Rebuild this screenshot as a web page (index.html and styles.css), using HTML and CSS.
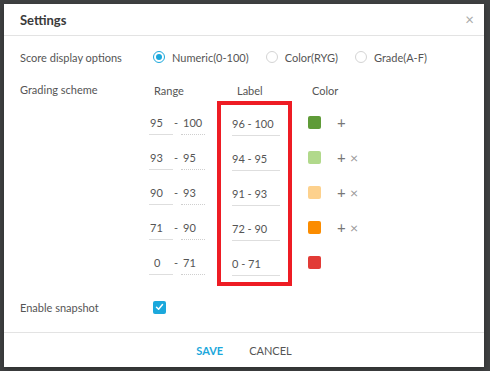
FILE: index.html
```html
<!DOCTYPE html>
<html lang="en">
<head>
    <meta charset="UTF-8">
    <meta name="viewport" content="width=device-width, initial-scale=1.0">
    <title>Settings</title>
    <link rel="stylesheet" href="styles.css">
</head>
<body>

    <div class="modal">
        <!-- Header -->
        <div class="modal-header">
            <h3>Settings</h3>
            <span class="close">&times;</span>
        </div>

        <div class="modal-body">
            <div class="form-row">
                <div class="row-label">Score display options</div>
                <div class="radio-group">
                    <label class="radio checked"><span class="circle"></span>Numeric(0-100)</label>
                    <label class="radio"><span class="circle"></span>Color(RYG)</label>
                    <label class="radio"><span class="circle"></span>Grade(A-F)</label>
                </div>
            </div>

            <div class="scheme">
                <div class="row-label scheme-label">Grading scheme</div>

                <div class="col col-range">
                    <div class="col-head">Range</div>
                    <div class="cell"><span class="input from">95</span><span class="dash">-</span><span class="input to">100</span></div>
                    <div class="cell"><span class="input from">93</span><span class="dash">-</span><span class="input to">95</span></div>
                    <div class="cell"><span class="input from">90</span><span class="dash">-</span><span class="input to">93</span></div>
                    <div class="cell"><span class="input from">71</span><span class="dash">-</span><span class="input to">90</span></div>
                    <div class="cell"><span class="input from center">0</span><span class="dash">-</span><span class="input to">71</span></div>
                </div>

                <div class="col col-label">
                    <div class="col-head">Label</div>
                    <div class="highlight">
                        <div class="cell"><span class="input label">96 - 100</span></div>
                        <div class="cell"><span class="input label">94 - 95</span></div>
                        <div class="cell"><span class="input label">91 - 93</span></div>
                        <div class="cell"><span class="input label">72 - 90</span></div>
                        <div class="cell"><span class="input label">0 - 71</span></div>
                    </div>
                </div>

                <div class="col col-color">
                    <div class="col-head">Color</div>
                    <div class="cell"><span class="swatch green"></span><span class="act">+</span></div>
                    <div class="cell"><span class="swatch light-green"></span><span class="act">+</span><span class="act remove">&times;</span></div>
                    <div class="cell"><span class="swatch light-orange"></span><span class="act">+</span><span class="act remove">&times;</span></div>
                    <div class="cell"><span class="swatch orange"></span><span class="act">+</span><span class="act remove">&times;</span></div>
                    <div class="cell"><span class="swatch red"></span></div>
                </div>
            </div>

            <div class="form-row snapshot">
                <div class="row-label">Enable snapshot</div>
                <span class="checkbox">
                    <svg width="9" height="8" viewBox="0 0 9 8"><path d="M1.5 4.2 L3.6 6.2 L7.5 1.6" fill="none" stroke="#fff" stroke-width="1.5" stroke-linecap="round" stroke-linejoin="round"/></svg>
                </span>
            </div>
        </div>

        <div class="modal-footer">
            <button class="btn btn-save">SAVE</button>
            <button class="btn btn-cancel">CANCEL</button>
        </div>
    </div>

</body>
</html>
```

FILE: styles.css
```css
body {
    margin: 0;
    padding: 4px;
    background-color: #3f4142;
    font-family: 'Lato', 'Open Sans', sans-serif;
    font-size: 11px;
    color: #555;
    box-sizing: border-box;
    height: 371px;
    overflow: hidden;
}

.modal {
    width: 480px;
    height: 363px;
    background-color: #fff;
    display: flex;
    flex-direction: column;
    box-shadow: 0 2px 6px rgba(0,0,0,0.3);
}

.modal-header {
    height: 31px;
    display: flex;
    align-items: center;
    justify-content: space-between;
    padding: 0 10px 0 16px;
    border-bottom: 1px solid #e3e3e3;
}

.modal-header h3 {
    margin: 0;
    font-size: 13px;
    font-weight: 700;
    color: #3a3a3a;
}

.close {
    color: #aaa;
    font-size: 15px;
    line-height: 1;
}

.modal-body {
    flex: 1;
    padding: 10px 16px 0 16px;
}

.form-row {
    display: flex;
    align-items: center;
    height: 22px;
}

.row-label {
    width: 133px;
    flex-shrink: 0;
    color: #555;
}

.radio-group {
    display: flex;
    gap: 17px;
}

.radio {
    display: flex;
    align-items: center;
    gap: 7px;
    color: #555;
}

.circle {
    width: 10px;
    height: 10px;
    border: 1px solid #d4d4d4;
    border-radius: 50%;
    position: relative;
}

.radio.checked .circle {
    border-color: #1ba8dc;
}

.radio.checked .circle::after {
    content: "";
    position: absolute;
    top: 2px;
    left: 2px;
    width: 6px;
    height: 6px;
    border-radius: 50%;
    background-color: #1ba8dc;
}

/* Grading scheme */
.scheme {
    display: flex;
    margin-top: 12px;
}

.scheme-label {
    width: 129px;
    height: 22px;
    line-height: 20px;
}

.col-head {
    height: 22px;
    line-height: 22px;
    margin-bottom: 3px;
}

.cell {
    height: 35px;
    display: flex;
    align-items: center;
}

.col-range {
    width: 56px;
}

.col-range .col-head {
    padding-left: 5px;
}

.input {
    display: inline-block;
    height: 22px;
    line-height: 22px;
    margin-top: 2px;
    border-bottom: 1px solid #dedede;
    color: #555;
}

.input.from {
    width: 23px;
    padding-left: 1px;
}

.input.from.center {
    width: 19px;
    padding-left: 5px;
}

.dash {
    width: 8px;
    padding-left: 1px;
    box-sizing: border-box;
}

.input.to {
    width: 22px;
    padding-left: 2px;
    border-bottom: 1px dotted #cfcfcf;
}

.col-label {
    margin-left: 12px;
    width: 75px;
}

.col-label .col-head {
    padding-left: 20px;
    margin-bottom: -1px;
}

.highlight {
    border: 4px solid #ee1c24;
    padding: 0 8px 2px 11px;
}

.input.label {
    width: 48px;
    margin-top: 3px;
}

.col-color {
    margin-left: 16px;
}

.col-color .col-head {
    padding-left: 4px;
}

.swatch {
    width: 13px;
    height: 13px;
    border-radius: 2px;
    margin-right: 16px;
}

.green { background-color: #5f9b38; }
.light-green { background-color: #b1d98b; }
.light-orange { background-color: #fdd18d; }
.orange { background-color: #fb8c00; }
.red { background-color: #e23b36; }

.act {
    color: #777;
    font-size: 15px;
    width: 11px;
    line-height: 1;
}

.act.remove {
    color: #999;
    font-size: 14px;
    margin-left: 2px;
}

.snapshot {
    margin-top: 10px;
}

.checkbox {
    width: 13px;
    height: 13px;
    border-radius: 2px;
    background-color: #1ba8dc;
    display: flex;
    align-items: center;
    justify-content: center;
}

/* Footer */
.modal-footer {
    height: 34px;
    border-top: 1px solid #e3e3e3;
    display: flex;
    justify-content: center;
    align-items: center;
    gap: 26px;
}

.btn {
    background: none;
    border: none;
    padding: 0;
    font-family: 'Lato', 'Open Sans', sans-serif;
    font-size: 11px;
    cursor: pointer;
}

.btn-save {
    color: #1ba8dc;
    font-weight: 700;
}

.btn-cancel {
    color: #555;
}
```
